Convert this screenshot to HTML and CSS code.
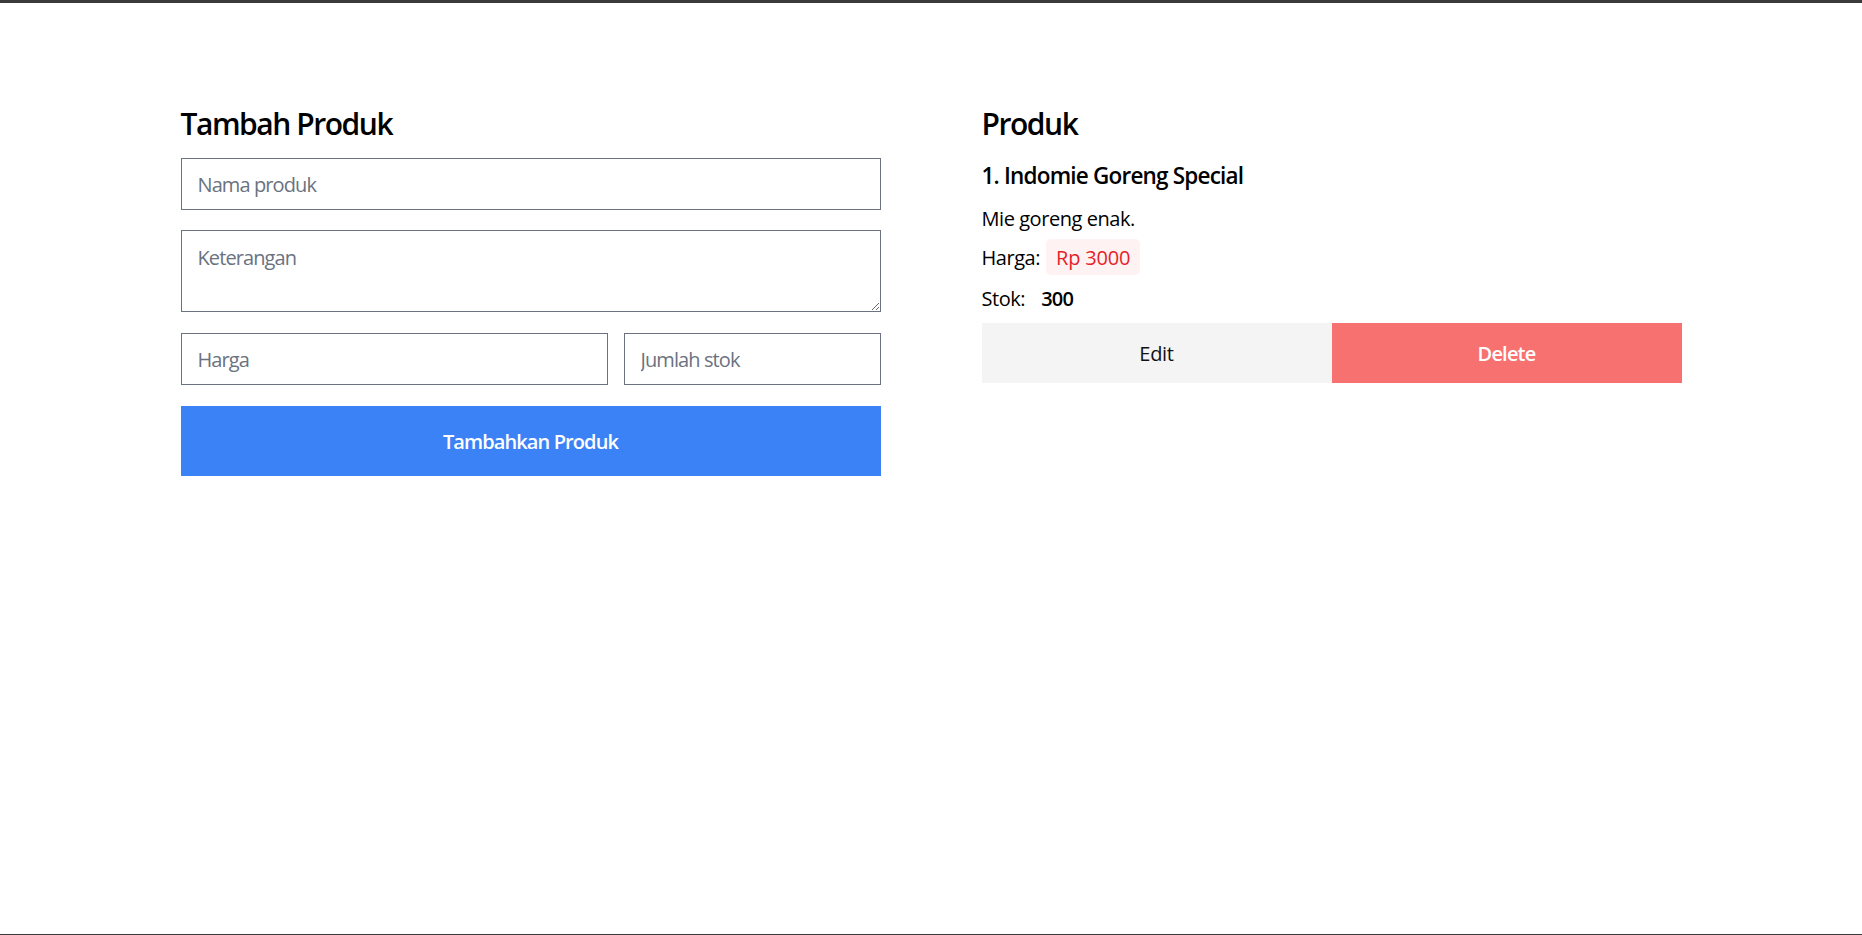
FILE: index.html
```html
<!DOCTYPE html>
<html lang="id">
<head>
<meta charset="utf-8">
<title>Produk</title>
<link rel="stylesheet" href="styles.css">
</head>
<body>
<div class="page">
  <main class="container">
    <section class="form-col">
      <h2 class="title">Tambah Produk</h2>
      <form class="form">
        <input class="field" type="text" placeholder="Nama produk">
        <textarea class="field area" placeholder="Keterangan"></textarea>
        <div class="row">
          <input class="field" type="text" placeholder="Harga">
          <input class="field" type="text" placeholder="Jumlah stok">
        </div>
        <button class="btn-primary" type="button">Tambahkan Produk</button>
      </form>
    </section>
    <section class="list-col">
      <h2 class="title">Produk</h2>
      <article class="product">
        <h3 class="name">1. Indomie Goreng Special</h3>
        <p class="desc">Mie goreng enak.</p>
        <div class="meta price-row"><span class="label">Harga:</span><span class="badge">Rp 3000</span></div>
        <div class="meta stock-row"><span>Stok:</span><span class="stock">300</span></div>
        <div class="actions">
          <button class="btn-edit" type="button">Edit</button>
          <button class="btn-delete" type="button">Delete</button>
        </div>
      </article>
    </section>
  </main>
</div>
</body>
</html>
```

FILE: styles.css
```css
* { box-sizing: border-box; }
html, body { margin: 0; padding: 0; }
body {
  font-family: "Open Sans", "Noto Sans", sans-serif;
  color: #000;
  background: #fff;
}
.page {
  height: 935px;
  border-top: 3px solid #3a3a3a;
  border-bottom: 1px solid #3a3a3a;
  overflow: hidden;
}
.container {
  width: 1501px;
  margin: 0 auto;
  padding-top: 101px;
  display: grid;
  grid-template-columns: 700px 700px;
  column-gap: 101px;
  align-items: start;
}
.title {
  margin: 0 0 14px;
  font-size: 30px;
  line-height: 40px;
  font-weight: 600;
  letter-spacing: -1.45px;
}
.form { display: flex; flex-direction: column; }
.field {
  display: block;
  width: 100%;
  height: 52px;
  margin: 0;
  border: 1px solid #6b7280;
  border-radius: 0;
  padding: 0 16px;
  font-family: inherit;
  font-size: 20px;
  letter-spacing: -0.9px;
  color: #111;
  background: #fff;
  outline: none;
}
.field::placeholder { color: #6b7280; opacity: 1; }
.area {
  margin-top: 20px;
  height: 82px;
  padding: 12px 16px 8px;
  line-height: 30px;
  resize: vertical;
}
.row {
  margin-top: 21px;
  display: grid;
  grid-template-columns: 427px 1fr;
  column-gap: 16px;
}
.btn-primary {
  margin-top: 21px;
  height: 70px;
  border: 0;
  background: #3b82f6;
  color: #fff;
  font-family: inherit;
  font-size: 20px;
  font-weight: 600;
  letter-spacing: -0.9px;
  cursor: pointer;
}
.product { font-size: 20px; line-height: 30px; letter-spacing: -0.45px; }
.name {
  margin: 0;
  font-size: 22.5px;
  line-height: 35px;
  font-weight: 600;
  letter-spacing: -0.8px;
}
.desc { margin: 11px 0 0; }
.meta { display: flex; align-items: center; }
.price-row { margin-top: 5px; gap: 6px; }
.price-row .label { padding-top: 2px; }
.badge {
  display: inline-block;
  padding: 4px 10px 2px;
  border-radius: 5px;
  background: #fef2f2;
  color: #e61e28;
  letter-spacing: -0.2px;
}
.stock-row { margin-top: 9px; gap: 16px; }
.stock { font-weight: 600; letter-spacing: -0.8px; }
.actions {
  margin-top: 9px;
  display: grid;
  grid-template-columns: 1fr 1fr;
}
.actions button {
  height: 60px;
  border: 0;
  font-family: inherit;
  font-size: 20px;
  cursor: pointer;
}
.btn-edit { background: #f4f4f4; color: #111; letter-spacing: -0.3px; }
.btn-delete { background: #f87171; color: #fff; font-weight: 600; letter-spacing: -0.8px; }
```
